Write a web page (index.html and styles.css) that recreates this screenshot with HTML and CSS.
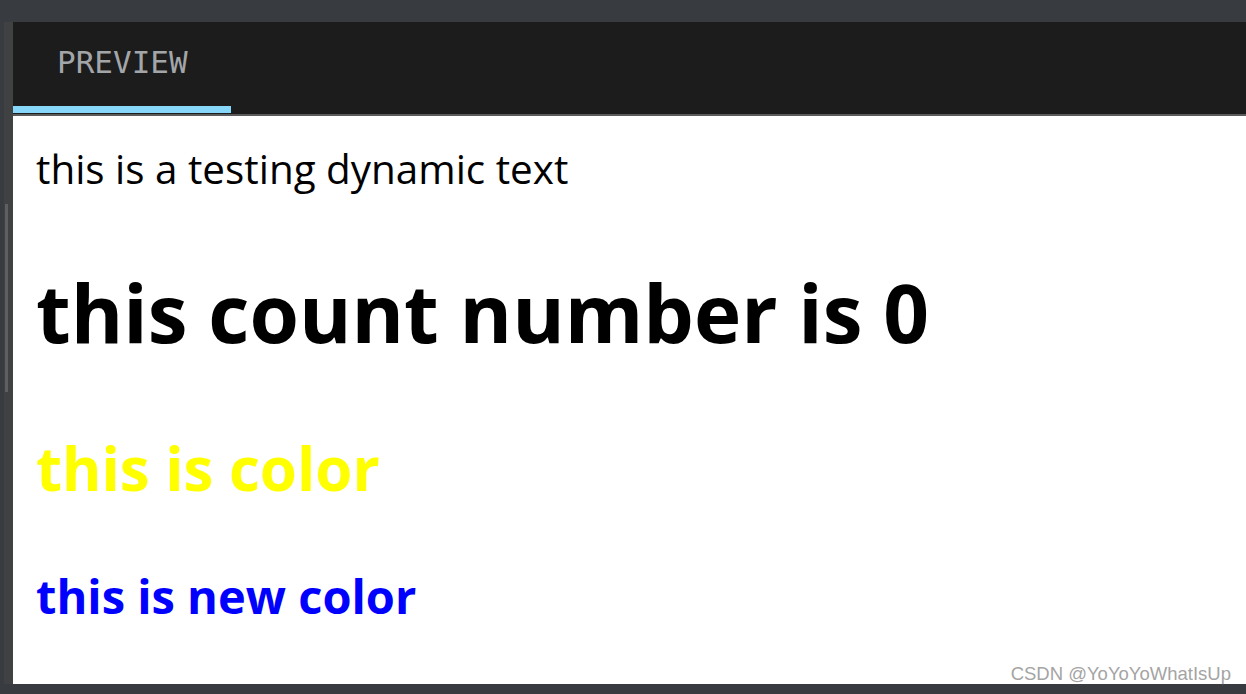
FILE: index.html
```html
<!DOCTYPE html>
<html lang="en">

<head>
  <meta charset="UTF-8">
  <meta name="viewport" content="width=device-width, initial-scale=1">
  <title>Preview</title>
  <link rel="stylesheet" href="styles.css">
</head>

<body>
  <div class="top_strip"></div>

  <div class="main_row">
    <div class="gutter">
      <div class="gutter_thumb"></div>
    </div>

    <div class="panel">
      <div class="tab_bar">
        <div class="tab tab_active">PREVIEW</div>
      </div>

      <div class="preview_body">
        <p class="dynamic_text">this is a testing dynamic text</p>
        <h1 class="count_text">this count number is 0</h1>
        <h2 class="color_text">this is color</h2>
        <h3 class="new_color_text">this is new color</h3>

        <span class="watermark">CSDN @YoYoYoWhatIsUp</span>
      </div>
    </div>
  </div>

  <div class="bottom_strip"></div>
</body>

</html>
```

FILE: styles.css
```css
html,
body {
  margin: 0;
  height: 694px;
  overflow: hidden;
}

body {
  background: #383c40;
  display: flex;
  flex-direction: column;
}

.top_strip {
  height: 22px;
  flex-shrink: 0;
}

.bottom_strip {
  height: 10px;
  flex-shrink: 0;
}

.main_row {
  flex: 1;
  display: flex;
  min-height: 0;
}

.gutter {
  width: 9px;
  margin-left: 4px;
  background: #404142;
  flex-shrink: 0;
}

.gutter_thumb {
  width: 3px;
  height: 188px;
  margin: 182px 0 0 1px;
  background: #5e5f60;
}

.panel {
  flex: 1;
  display: flex;
  flex-direction: column;
}

.tab_bar {
  display: flex;
  background: #1c1c1c;
  padding-bottom: 1px;
  border-bottom: 2px solid #5b5b5b;
}

.tab {
  padding: 25px 43px 28px 44px;
  font-family: "DejaVu Sans Mono", monospace;
  font-size: 31px;
  line-height: 31px;
  color: #a3a6a9;
  border-bottom: 7px solid transparent;
}

.tab_active {
  border-bottom-color: #87d7fb;
}

.preview_body {
  flex: 1;
  position: relative;
  background: #fff;
  padding: 29px 0 0 23px;
  font-family: "Open Sans", sans-serif;
  color: #000;
}

.preview_body p,
.preview_body h1,
.preview_body h2,
.preview_body h3 {
  margin: 0;
  line-height: 1.2;
}

.dynamic_text {
  font-size: 40.4px;
}

.count_text {
  font-size: 80px;
  font-weight: 700;
  margin-top: 71px !important;
}

.color_text {
  font-size: 60px;
  font-weight: 700;
  color: #ffff00;
  margin-top: 72px !important;
}

.new_color_text {
  font-size: 47px;
  font-weight: 700;
  color: #0000ff;
  margin-top: 64px !important;
}

.watermark {
  position: absolute;
  right: 15px;
  bottom: -1px;
  font-family: "Liberation Sans", Arial, sans-serif;
  font-size: 18.5px;
  color: #a4a4a4;
  text-shadow: 0 0 1px #fff;
}
```
